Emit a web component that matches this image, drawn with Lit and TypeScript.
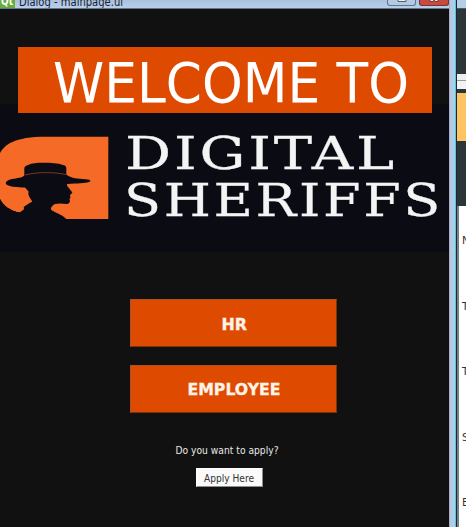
import { LitElement, html, css, svg } from "lit";
import { customElement } from "lit/decorators.js";

/** Single line of SVG text fitted to an exact width inside its own box. */
const line = (
  cls: string,
  text: string,
  w: number,
  h: number,
  x: number,
  baseline: number,
  length: number
) => html`<svg class="line ${cls}" width=${w} height=${h} viewBox="0 0 ${w} ${h}">
  ${svg`<text x=${x} y=${baseline} textLength=${length} lengthAdjust="spacingAndGlyphs">${text}</text>`}
</svg>`;

@customElement("sheriff-banner")
class SheriffBanner extends LitElement {
  static styles = css`
    :host {
      display: flex;
      height: 148px;
      background: #0b0b13;
    }
    .mark { flex: none; filter: blur(0.3px); }
    .words { display: flex; flex-direction: column; padding-top: 26px; }
    .line { display: block; overflow: visible; filter: blur(0.3px); }
    text {
      font-family: "DejaVu Serif", serif;
      font-size: 45px;
      letter-spacing: 2.2px;
      fill: #f4f4f4;
      stroke: #f4f4f4;
      stroke-width: 0.3px;
    }
  `;
  render() {
    return html`
      <svg class="mark" width="124" height="148" viewBox="0 104 124 148">
        <path fill="#f56a27" d="M108.300 136.700H40C26 137 16 140 10 143C5 146 2 149 0 153V199C3 205 9 210 20 213L60 219H108.300Z" />
        <path
          fill="#0b0b13"
          d="M24.300 175.500V169.500C24 167 25 166 28 165C32 163 37 162.700 43 162.700C51 162.700 58 163 63 165C66 165.500 66.300 167 66.300 168.500V174.500C69 176.500 72 178 77 178.500L88 179.500C91 180 91 181.500 89 182C85 183.500 78 183.200 67 184C67 186 67.500 187 68.500 187.500L72.300 192.500C72 194 70 194 70 195.700L70.500 197.500L69.500 199L70 201C69.500 203 69 204 66.500 204L60 203.500L55 204C53 205 52 206.500 51 207.700C50.500 209 51.500 210.500 53 211C58 214 63 215 66.700 219.500V223H0V199C3 206 12 212 20 212.300L24 209.300C24 208 23.500 207.500 24 206.700C27 205 30 202 32.300 201.700C31 199 29.500 198 29 196C28 194.500 28.500 193 28.500 191.500L25 187.500C21 187.500 18 187 13 186.700C9 186 6 185 5.700 183.300C6 181 8 180 12 179C17 178 22 178 24.300 175.500Z"
        />
        <path fill="none" stroke="#a34a23" stroke-width=".7" d="M25 175C37 171.800 54 172 66 174.500" />
      </svg>
      <div class="words">
        ${line("", "DIGITAL", 316, 47, 1, 39, 272)}
        ${line("", "SHERIFFS", 316, 47, 0, 38.5, 319)}
      </div>
    `;
  }
}

@customElement("welcome-dialog")
class WelcomeDialog extends LitElement {
  static styles = css`
    :host {
      display: flex;
      flex-direction: column;
      width: 449px;
      height: 527px;
      background: #111;
      overflow: hidden;
    }
    .line { display: block; flex: none; }
    text { font-family: "DejaVu Sans", sans-serif; }
    .titlebar {
      display: flex;
      flex: none;
      height: 9px;
      overflow: hidden;
      background: linear-gradient(#a9c2df, #b9cfe9);
      border-bottom: 1px solid #64748a;
      box-sizing: border-box;
    }
    .qt { flex: none; width: 15px; height: 8px; background: #68ad3b; }
    .qt text { font-size: 12px; font-weight: bold; fill: #fff; }
    .caption text { font-size: 12px; fill: #17202f; }
    .controls { display: flex; gap: 3px; margin-left: auto; }
    .ctl {
      box-sizing: border-box;
      width: 29px;
      height: 6px;
      border: 1px solid #62758f;
      border-top: 0;
      border-radius: 0 0 3px 3px;
      background: #b4c9e2;
      display: flex;
      justify-content: center;
    }
    .close { width: 30px; background: #c9493c; border-color: #6c3540; }
    .title { margin: 38px 0 0 18px; background: #de4b00; position: relative; }
    .title text { font-size: 56px; fill: #fff; }
    sheriff-banner { margin-top: -9px; flex: none; }
    .buttons {
      display: flex;
      flex-direction: column;
      gap: 18px;
      margin: 47px 0 0 130px;
    }
    .button {
      box-sizing: border-box;
      width: 207px;
      height: 48px;
      background: #de4b00;
      border: 1px solid;
      border-color: #ae5124 #7c3109 #7c3109 #ae5124;
    }
    .button text {
      font-size: 15.5px;
      font-weight: bold;
      fill: #fff3e8;
      stroke: #fff3e8;
      stroke-width: 0.3px;
    }
    .question { margin: 28px 0 0 170px; }
    .question text { font-size: 11px; fill: #e8e8e8; }
    .apply {
      box-sizing: border-box;
      flex: none;
      width: 67px;
      height: 19px;
      margin: 9px 0 0 196px;
      background: #fafafa;
      border: 1px solid;
      border-color: #fff #8c8c8c #8c8c8c #fff;
    }
    .apply text { font-size: 11px; fill: #333; }
  `;
  render() {
    return html`
      <div class="titlebar">
        ${line("qt", "Qt", 15, 8, 1, 5, 12)}
        ${line("caption", "Dialog - mainpage.ui", 130, 8, 4, 5.5, 104)}
        <div class="controls">
          <div class="ctl">
            <svg width="12" height="5"><path d="M2 0V1.500H10V0" fill="#eee" stroke="#55606d" /></svg>
          </div>
          <div class="ctl close">
            <svg width="12" height="5"><path d="M2 0V1.500H5L6 0L7 1.500H10V0" fill="#eee" stroke="#743b40" /></svg>
          </div>
        </div>
      </div>
      ${line("title", "WELCOME TO", 414, 66, 35, 55, 356)}
      <sheriff-banner></sheriff-banner>
      <div class="buttons">
        <div class="button">${line("", "HR", 205, 46, 90.5, 29.5, 25.5)}</div>
        <div class="button">${line("", "EMPLOYEE", 205, 46, 56.5, 29, 93)}</div>
      </div>
      ${line("question", "Do you want to apply?", 120, 18, 5.5, 12.5, 103)}
      <div class="apply">${line("", "Apply Here", 65, 17, 7, 13, 50)}</div>
    `;
  }
}

@customElement("side-window")
class SideWindow extends LitElement {
  static styles = css`
    :host {
      display: flex;
      flex-direction: column;
      flex: 1;
      height: 527px;
      overflow: hidden;
      background: #2c3638;
    }
    .top, .dark, .tool, .accent, .form { flex: none; }
    .top { height: 8px; background: #b5cee8; border-bottom: 1px solid #4b5c6c; }
    .dark { height: 65px; }
    .tool { height: 6px; background: #ededed; border-bottom: 1px solid #999; }
    .tool.lower { height: 8px; border-bottom: 0; background: #f2f2f2; }
    .accent { height: 48px; margin-top: 4px; background: #fec461; }
    .form {
      height: 321px;
      margin-top: 65px;
      border-left: 2px solid #777f82;
      background: #fff;
      padding-top: 28px;
      box-sizing: border-box;
      overflow: hidden;
    }
    .label {
      height: 65.6px;
      padding-left: 3px;
      font: 10.5px/13px "DejaVu Sans", sans-serif;
      color: #333;
      white-space: nowrap;
    }
  `;
  render() {
    return html`
      <div class="top"></div>
      <div class="dark"></div>
      <div class="tool"></div>
      <div class="tool lower"></div>
      <div class="accent"></div>
      <div class="form">
        ${["N", "T", "T", "S", "E"].map((t) => html`<div class="label">${t}</div>`)}
      </div>
    `;
  }
}

@customElement("app-root")
class AppRoot extends LitElement {
  static styles = css`
    :host {
      display: flex;
      width: 466px;
      height: 527px;
      overflow: hidden;
      background: #111;
    }
    welcome-dialog, .frame { flex: none; }
    .frame {
      width: 8px;
      height: 527px;
      background: linear-gradient(
        90deg,
        #a9aec6 0 1px,
        #b8c8e3 1px 4px,
        #a2d4ed 4px 6px,
        #65bdd8 6px 7px,
        #102c34 7px
      );
    }
  `;
  render() {
    return html`
      <welcome-dialog></welcome-dialog>
      <div class="frame"></div>
      <side-window></side-window>
    `;
  }
}
